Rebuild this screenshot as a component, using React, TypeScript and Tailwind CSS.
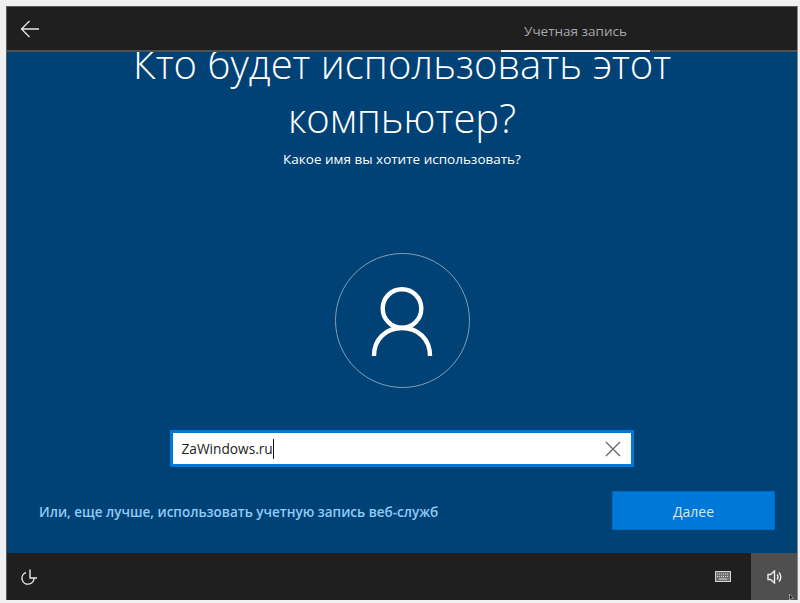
import React from "react";

const font = "font-['Open_Sans','Noto_Sans',sans-serif]";

const App = () => {
  return (
    <div className={`h-[603px] w-[800px] overflow-hidden bg-[#f0f0f0] pl-[6px] pr-[2px] pt-[6px] pb-[3px] ${font}`}>
      <div className="flex h-full flex-col border border-b-0 border-[#5a5a5a] border-r-[#8a8a8a]">
        {/* top bar */}
        <div className="flex h-[45px] shrink-0 items-start justify-between border-b-2 border-[#505050] bg-[#1f1f1f]">
          <button className="ml-[13px] mt-[13px] text-[#e8e8e8]">
            <svg width="20" height="18" viewBox="0 0 20 18" fill="none" stroke="currentColor" strokeWidth="1.3">
              <path d="M19 9H1.5M9.5 1L1.5 9l8 8" />
            </svg>
          </button>
          <div className="mr-[147px] flex h-[45px] w-[149px] items-start justify-center border-b-2 border-[#f2f2f2]">
            <span className="mt-[14px] text-[13.5px] leading-[20px] text-[#a8a8a8]">Учетная запись</span>
          </div>
        </div>

        {/* main */}
        <div className="flex min-h-0 flex-1 flex-col items-center overflow-hidden bg-[#004275]">
          <h1 className="-mt-[15px] text-center text-[40px] font-light leading-[54px] text-white">
            Кто будет использовать этот
            <br />
            компьютер?
          </h1>
          <p className="mt-[5px] text-[13.5px] leading-[18px] text-white">Какое имя вы хотите использовать?</p>

          <div className="mt-[85px] flex size-[135px] items-center justify-center rounded-full border border-[#7f9fb8]">
            <svg className="mt-[3px]" width="62" height="70" viewBox="0 0 62 70" fill="none" stroke="white" strokeWidth="4.4">
              <circle cx="31" cy="21.5" r="19.3" />
              <path d="M3 69C3 52 15 41 31 41s28 11 28 28" />
            </svg>
          </div>

          <div className="mr-[1px] mt-[42px] flex h-[37px] w-[464px] items-center justify-between border-[3px] border-[#0078d7] bg-white pl-[9px] pr-[10px]">
            <div className="flex items-center">
              <span className="text-[13.7px] leading-[20px] text-[#222]">ZaWindows.ru</span>
              <span className="h-[20px] w-px bg-[#111]" />
            </div>
            <svg width="16" height="16" viewBox="0 0 16 16" fill="none" stroke="#666666" strokeWidth="1.3">
              <path d="M1 1l14 14M15 1L1 15" />
            </svg>
          </div>

          <div className="mt-[24px] flex w-full items-center justify-between pl-[32px] pr-[22px]">
            <a className="mt-[2px] text-[13.5px] font-semibold leading-[20px] text-[#8fcbf8]">
              Или, еще лучше, использовать учетную запись веб-служб
            </a>
            <button className="flex h-[39px] w-[163px] items-center justify-center border border-[#0068bd] bg-[#0078d7] pt-[2px] text-[14px] text-[#d4e9fa]">
              Далее
            </button>
          </div>
        </div>

        {/* bottom bar */}
        <div className="flex h-[47px] shrink-0 items-center justify-between bg-[#1f1f1f]">
          <svg className="ml-[14px]" width="18" height="18" viewBox="0 0 18 18" fill="none" stroke="#e6e6e6" strokeWidth="1.4">
            <path d="M5 4.5a6 6 0 1 0 8 5.5M9 1.5V10h7" />
          </svg>
          <div className="flex h-full items-center">
            <svg className="mr-[20px]" width="16" height="11" viewBox="0 0 16 11" fill="none">
              <rect x="0.5" y="0.5" width="15" height="10" fill="#6f6f6f" stroke="#d4d4d4" />
              <path d="M2 3h12M2 5.5h12" stroke="#dddddd" strokeDasharray="1 1" />
              <path d="M4 8h8" stroke="#dddddd" />
            </svg>
            <div className="relative flex h-full w-[46px] items-center justify-center bg-[#4f4f4f]">
              <svg width="15" height="14" viewBox="0 0 15 14" fill="none" stroke="#eeeeee" strokeWidth="1.4">
                <path d="M1 4.5h2.5L7.5 1v12L3.5 9.5H1z" />
                <path d="M10 4.5a3.5 3.5 0 0 1 0 5M12 2.5a6.5 6.5 0 0 1 0 9" />
              </svg>
              <svg className="absolute bottom-0 left-[38px]" width="5" height="6" viewBox="0 0 5 6" fill="#111111" stroke="#eeeeee" strokeWidth="0.5">
                <path d="M0.5 0v6l1.3-1.4H4.5z" />
              </svg>
            </div>
          </div>
        </div>
      </div>
    </div>
  );
};

export default App;
